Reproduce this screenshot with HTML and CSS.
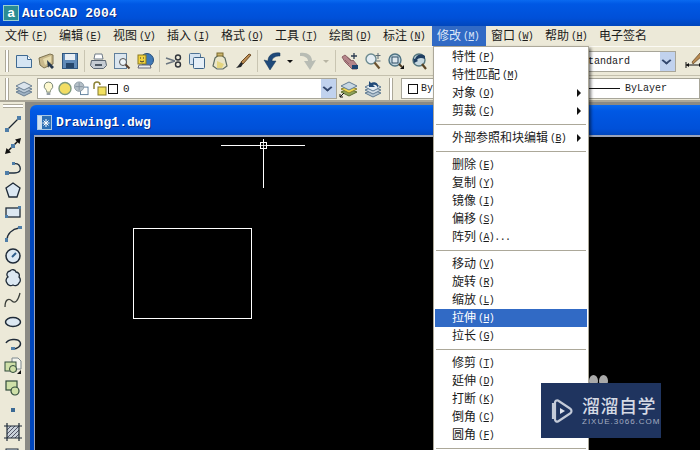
FILE: index.html
```html
<!DOCTYPE html>
<html lang="zh">
<head>
  <meta charset="UTF-8">
  <title>AutoCAD 2004</title>
  <link rel="stylesheet" href="styles.css">
</head>
<body>
  <div class="app">
    <div class="titlebar">
      <span class="app-icon">a</span>
      <span class="title-text">AutoCAD 2004</span>
    </div>

    <ul class="menubar">
      <li>文件<span class="key">(<u>F</u>)</span></li>
      <li>编辑<span class="key">(<u>E</u>)</span></li>
      <li>视图<span class="key">(<u>V</u>)</span></li>
      <li>插入<span class="key">(<u>I</u>)</span></li>
      <li>格式<span class="key">(<u>O</u>)</span></li>
      <li>工具<span class="key">(<u>T</u>)</span></li>
      <li>绘图<span class="key">(<u>D</u>)</span></li>
      <li>标注<span class="key">(<u>N</u>)</span></li>
      <li class="active">修改<span class="key">(<u>M</u>)</span></li>
      <li>窗口<span class="key">(<u>W</u>)</span></li>
      <li>帮助<span class="key">(<u>H</u>)</span></li>
      <li>电子签名</li>
    </ul>

    <div class="toolbar row-one">
      <span class="grip"></span>
      <svg class="ico" viewBox="0 0 18 18"><path d="M1.500 3.500h11l4 4v8h-15z" fill="#d5e5f3" stroke="#3f6a92"/><path d="M12.500 3.500v4h4" fill="#fff" stroke="#3f6a92"/></svg>
      <svg class="ico" viewBox="0 0 18 18"><path d="M1 6l11-4 3 1v9l-9 4-4-3z" fill="#c9b98c" stroke="#7d7350"/><path d="M5 7l8-3v6l-6 3z" fill="#e7dcae"/><path d="M9 8l7 7-2 2-3-3-1 2z" fill="#26384e"/></svg>
      <svg class="ico" viewBox="0 0 18 18"><rect x="1.500" y="1.500" width="15" height="15" fill="#5f8ab8" stroke="#2f567f"/><rect x="4" y="2" width="10" height="6" fill="#e8eef4"/><rect x="5" y="11" width="8" height="5" fill="#24466b"/></svg>
      <span class="sep"></span>
      <svg class="ico" viewBox="0 0 18 18"><path d="M5 2h7l1 5H4z" fill="#fff" stroke="#6f7a86"/><path d="M1.500 8.500h14l1 5-3 3h-10l-3-3z" fill="#c5ccd3" stroke="#5a6672"/><rect x="5" y="12" width="7" height="2" fill="#4d5965"/></svg>
      <svg class="ico" viewBox="0 0 18 18"><rect x="1.500" y="1.500" width="12" height="15" fill="#dbe6ef" stroke="#607f9c"/><circle cx="10" cy="10" r="3.500" fill="#eef4f8" stroke="#555"/><path d="M12.500 12.500l4 4" stroke="#5a3e2c" stroke-width="2"/></svg>
      <svg class="ico" viewBox="0 0 18 18"><circle cx="11" cy="8" r="6.500" fill="#3f78b5" stroke="#264f7c"/><rect x="2" y="3" width="8" height="9" fill="#f2d33f" stroke="#8a7a20"/><path d="M4 6h1M7 6h1M4 9l2 1 2-1" stroke="#333" fill="none"/><path d="M3 13h11l1 3H2z" fill="#e9edf1" stroke="#667"/></svg>
      <span class="sep"></span>
      <svg class="ico" viewBox="0 0 18 18"><path d="M1 6l9 3M1 12l9-3" stroke="#6b7680" stroke-width="1.500"/><circle cx="13" cy="5.500" r="2.500" fill="none" stroke="#30343a" stroke-width="1.400"/><circle cx="13" cy="12.500" r="2.500" fill="none" stroke="#30343a" stroke-width="1.400"/></svg>
      <svg class="ico" viewBox="0 0 18 18"><rect x="1.500" y="1.500" width="11" height="11" rx="1" fill="#d5e3f0" stroke="#4f7395"/><rect x="5.500" y="5.500" width="11" height="11" rx="1" fill="#e6eff7" stroke="#3d6388"/></svg>
      <svg class="ico" viewBox="0 0 18 18"><path d="M4 6l5-4 5 4 2 8-4 3H6l-4-3z" fill="#eae6c9" stroke="#5d6b62" stroke-width="1.200"/><rect x="6" y="1" width="6" height="3" fill="#c9b46a" stroke="#7c6b2e"/><path d="M6 9l7 3-2 4H6z" fill="#e3d57f"/></svg>
      <svg class="ico" viewBox="0 0 18 18"><path d="M15 2l2 1-8 9-2-2z" fill="#b98b52" stroke="#6d4b24"/><path d="M7 10l2 2-2 3-5 1 2-2z" fill="#23262a"/></svg>
      <span class="sep"></span>
      <svg class="ico" viewBox="0 0 18 18"><path d="M17 1C10 0 5 3 5 9L1 8l6 10 6-9-4 0C9 6 12 4 17 4z" fill="#1f4a7a" stroke="#163757" stroke-width=".5"/></svg>
      <span class="caret"></span>
      <svg class="ico" viewBox="0 0 18 18"><path d="M1 1C8 0 13 3 13 9l4-1-6 10-6-9 4 0C9 6 6 4 1 4z" fill="#b8bcb4"/></svg>
      <span class="caret caret-off"></span>
      <span class="sep"></span>
      <svg class="ico" viewBox="0 0 18 18"><path d="M1 5l3-2 7 6 1-1 4 5v4h-5l-3-3-4-4z" fill="#b5858a" stroke="#8d6266"/><path d="M4 8l4 4M6 5l4 4" stroke="#8d6266"/><path d="M13 1v6M10 4h6" stroke="#2b3c50" stroke-width="1.300"/><path d="M11 13h6v4h-6z" fill="#1f4470"/></svg>
      <svg class="ico" viewBox="0 0 18 18"><circle cx="7" cy="7" r="5" fill="#e4edf3" stroke="#6b8a90" stroke-width="1.400"/><path d="M10.500 10.500l5 6" stroke="#6b5230" stroke-width="2.200"/><path d="M14 1v6M11.500 3.500h5M11.500 9h5" stroke="#5b6a74"/></svg>
      <svg class="ico" viewBox="0 0 18 18"><circle cx="8" cy="8" r="6" fill="#c4d6df" stroke="#4e7383" stroke-width="1.400"/><rect x="5" y="5" width="6" height="6" fill="#dfe8ee" stroke="#2e4e66"/><path d="M12 12l3 3" stroke="#4f3c22" stroke-width="2"/><path d="M13 17h4v-4z" fill="#111"/></svg>
      <svg class="ico" viewBox="0 0 18 18"><circle cx="9" cy="8" r="6" fill="#c5d7df" stroke="#55777f" stroke-width="1.400"/><path d="M15 4c-4-3-9-1-10 3l-2-1 1 5 4-2-1-1c1-2 4-3 8-1z" fill="#1f3f62"/><path d="M12 12l4 5" stroke="#5a4526" stroke-width="2.200"/></svg>
      <div class="combo combo-style">
        <span class="combo-text">Standard</span>
        <span class="combo-arrow"></span>
      </div>
      <svg class="ico dim-ico" viewBox="0 0 18 18"><path d="M1 13h16" stroke="#111"/><path d="M1 13l3-2v4zM17 13l-3-2v4z" fill="#111"/><path d="M1 10v6" stroke="#111"/><path d="M15 1L7 10l1 2 9-8z" fill="#b98b52" stroke="#5d4222" stroke-width=".7"/></svg>
    </div>

    <div class="toolbar row-two">
      <span class="grip"></span>
      <svg class="ico" viewBox="0 0 18 18"><path d="M9 9l8 3-8 4-8-4z" fill="#9fb2c4" stroke="#6a7f93"/><path d="M9 6l8 3-8 4-8-4z" fill="#bccbd8" stroke="#6a7f93"/><path d="M9 2l8 4-8 4-8-4z" fill="#dbe4ec" stroke="#6a7f93"/></svg>
      <div class="combo combo-layer">
        <svg class="state bulb" viewBox="0 0 12 16"><path d="M6 1a4.500 4.500 0 0 0-3 8c1 1 1 2 1 3h4c0-1 0-2 1-3a4.500 4.500 0 0 0-3-8z" fill="#fdf8cf" stroke="#6f7d6c"/><path d="M4 13h4v2H4z" fill="#8b969e"/></svg>
        <svg class="state sun" viewBox="0 0 14 14"><circle cx="7" cy="7" r="6" fill="#f2dd63" stroke="#7e9a7d" stroke-width="1.400"/></svg>
        <svg class="state frozen" viewBox="0 0 16 16"><rect x="7.500" y="6.500" width="8" height="8" fill="#fff" stroke="#5e7f9c"/><circle cx="6" cy="6" r="5" fill="#b5c0c8" stroke="#8c9aa4"/><path d="M6 2v8M2 6h8" stroke="#8492a0"/></svg>
        <svg class="state lock" viewBox="0 0 15 15"><path d="M2 8V4a3 3 0 0 1 6 0" fill="none" stroke="#8c8236" stroke-width="1.500"/><rect x="6" y="6" width="8" height="8" fill="#f2e160" stroke="#857a2a"/></svg>
        <span class="swatch"></span>
        <span class="layer-name">0</span>
        <span class="combo-arrow"></span>
      </div>
      <svg class="ico layer-tool" viewBox="0 0 18 18"><path d="M10 9l8 3-8 4-8-4z" fill="#8ea45c" stroke="#5c6d34"/><path d="M10 6l8 3-8 4-8-4z" fill="#f0d94f" stroke="#8a8030"/><path d="M10 2l8 4-8 4-8-4z" fill="#c7d7e2" stroke="#5f7a92"/><path d="M5 13l-4 4M1 14v3h3" stroke="#111" fill="none"/></svg>
      <svg class="ico" viewBox="0 0 18 18"><path d="M9 10l8 3-8 4-8-4z" fill="#b5c5d1" stroke="#5f7a92"/><path d="M9 7l8 3-8 4-8-4z" fill="#d3dee6" stroke="#5f7a92"/><path d="M9 3l8 4-8 4-8-4z" fill="#e4ebf0" stroke="#5f7a92"/><path d="M14 8c1-5-3-7-7-5L5 1v6h6L9 5c2-1 4 0 5 3z" fill="#214a78"/></svg>
      <span class="grip grip-mid"></span>
      <div class="combo combo-props">
        <span class="swatch swatch-props"></span>
        <span class="prop-text">By</span>
        <span class="line-sample"></span>
        <span class="prop-text">ByLayer</span>
      </div>
    </div>

    <div class="workspace">
      <div class="side-toolbar">
        <span class="side-grip"></span>
        <svg class="ico" viewBox="0 0 18 18"><path d="M3 15L15 3" stroke="#1d2730" stroke-width="1.300"/><rect x="1" y="13" width="4" height="4" fill="#4f7ea8"/><rect x="13" y="1" width="4" height="4" fill="#4f7ea8"/></svg>
        <svg class="ico" viewBox="0 0 18 18"><path d="M3 15L15 3" stroke="#111" stroke-width="1.500"/><path d="M17 1l-6 1.500 4.500 4.500zM1 17l6-1.500L2.500 11z" fill="#111"/><rect x="7" y="7" width="4" height="4" fill="#4f7ea8"/></svg>
        <svg class="ico" viewBox="0 0 18 18"><path d="M2 14h8c6 0 7-3 6-6s-4-4-7-3" fill="none" stroke="#203040" stroke-width="1.400"/><rect x="1" y="12" width="4" height="4" fill="#4f7ea8"/><rect x="8" y="3" width="3" height="3" fill="#4f7ea8"/></svg>
        <svg class="ico" viewBox="0 0 18 18"><path d="M9 2l7 5-3 9H5L2 7z" fill="#dce8f2" stroke="#1f2b38" stroke-width="1.300"/></svg>
        <svg class="ico" viewBox="0 0 18 18"><rect x="2" y="5" width="14" height="9" fill="#dce8f2" stroke="#1f2b38" stroke-width="1.300"/><rect x="1" y="12" width="3" height="3" fill="#4f7ea8"/><rect x="14" y="3" width="3" height="3" fill="#4f7ea8"/></svg>
        <svg class="ico" viewBox="0 0 18 18"><path d="M3 15C3 9 8 4 15 3" fill="none" stroke="#1f2b38" stroke-width="1.400"/><rect x="1" y="13" width="3" height="4" fill="#4f7ea8"/><rect x="14" y="1" width="4" height="3" fill="#4f7ea8"/></svg>
        <svg class="ico" viewBox="0 0 18 18"><circle cx="9" cy="9" r="7" fill="#dce8f2" stroke="#1f2b38" stroke-width="1.500"/><path d="M8 10l4-4" stroke="#2d5d8c" stroke-width="2"/></svg>
        <svg class="ico" viewBox="0 0 18 18"><path d="M4 8a3.500 3.500 0 0 1 2-6 3.500 3.500 0 0 1 6 1 3.500 3.500 0 0 1 3 5 4 4 0 0 1 0 6 4 4 0 0 1-6 2 4 4 0 0 1-6-2 4 4 0 0 1 1-6z" fill="#dce8f2" stroke="#1f2b38" stroke-width="1.300"/></svg>
        <svg class="ico" viewBox="0 0 18 18"><path d="M1 16c0-8 4-9 7-6s6 0 8-8" fill="none" stroke="#3b3f3a" stroke-width="1.300"/></svg>
        <svg class="ico" viewBox="0 0 18 18"><ellipse cx="9" cy="9" rx="7.500" ry="4.500" fill="#dce8f2" stroke="#1f2b38" stroke-width="1.500"/></svg>
        <svg class="ico" viewBox="0 0 18 18"><path d="M2 8c2-4 12-5 14-1s-3 7-7 7" fill="none" stroke="#1f2b38" stroke-width="1.500"/><rect x="7" y="12" width="4" height="3" fill="#4f7ea8"/></svg>
        <svg class="ico" viewBox="0 0 18 18"><path d="M8 1h6l3 3v8H8z" fill="#f4f4ec" stroke="#7f8a90"/><rect x="1" y="5" width="11" height="9" fill="#cfe0a8" stroke="#2f4a3a"/><circle cx="9" cy="12" r="3.500" fill="#cfe0a8" stroke="#2f4a3a"/><path d="M13 17l4-4v4z" fill="#111"/></svg>
        <svg class="ico" viewBox="0 0 18 18"><rect x="2" y="2" width="11" height="9" fill="#cfe0a8" stroke="#2f4a3a" stroke-width="1.200"/><circle cx="11" cy="12" r="4" fill="#cfe0a8" stroke="#2f4a3a" stroke-width="1.200"/></svg>
        <svg class="ico" viewBox="0 0 18 18"><rect x="7" y="7" width="4" height="4" fill="#3c6a94"/></svg>
        <svg class="ico" viewBox="0 0 18 18"><rect x="3" y="3" width="12" height="12" fill="#c9d2da"/><path d="M3 7l4-4M3 11l8-8M3 15l12-12M7 15l8-8M11 15l4-4" stroke="#556"/><path d="M3 0v18M15 0v18M0 3h18M0 15h18" stroke="#1f2b38" stroke-width="1.200"/></svg>
        <svg class="ico" viewBox="0 0 18 18"><rect x="2" y="4" width="12" height="12" fill="#dce8f2" stroke="#1f2b38"/></svg>
      </div>

      <div class="mdi-area">
        <div class="child-window">
          <div class="child-title">
            <svg class="child-icon" viewBox="0 0 15 15"><rect x=".5" y=".5" width="14" height="14" fill="#2c6fb5" stroke="#a9c7e4"/><rect x="1" y="1" width="4" height="13" fill="#cfe0f0"/><path d="M9 4v8M5.500 8h7M6.500 5.500l5 5M11.500 5.500l-5 5" stroke="#fff"/></svg>
            <span class="title-text">Drawing1.dwg</span>
          </div>
          <div class="canvas">
            <svg class="drawing" viewBox="35 137 665 313" width="665" height="313">
              <rect x="133.500" y="228.500" width="118" height="90" fill="none" stroke="#fff"/>
              <path d="M221 145.500h84M263.500 139v49" stroke="#fff"/>
              <rect x="260.500" y="142.500" width="6" height="6" fill="#000" stroke="#fff"/>
              <path d="M263.500 142v7M260 145.500h7" stroke="#fff" stroke-width=".8"/>
            </svg>
          </div>
        </div>
      </div>
    </div>

    <div class="menu">
      <div class="menu-item">特性<span class="key">(<u>P</u>)</span></div>
      <div class="menu-item">特性匹配<span class="key">(<u>M</u>)</span></div>
      <div class="menu-item has-sub">对象<span class="key">(<u>O</u>)</span></div>
      <div class="menu-item has-sub">剪裁<span class="key">(<u>C</u>)</span></div>
      <div class="menu-sep"></div>
      <div class="menu-item has-sub">外部参照和块编辑<span class="key">(<u>B</u>)</span></div>
      <div class="menu-sep"></div>
      <div class="menu-item">删除<span class="key">(<u>E</u>)</span></div>
      <div class="menu-item">复制<span class="key">(<u>Y</u>)</span></div>
      <div class="menu-item">镜像<span class="key">(<u>I</u>)</span></div>
      <div class="menu-item">偏移<span class="key">(<u>S</u>)</span></div>
      <div class="menu-item">阵列<span class="key">(<u>A</u>)...</span></div>
      <div class="menu-sep"></div>
      <div class="menu-item">移动<span class="key">(<u>V</u>)</span></div>
      <div class="menu-item">旋转<span class="key">(<u>R</u>)</span></div>
      <div class="menu-item">缩放<span class="key">(<u>L</u>)</span></div>
      <div class="menu-item selected">拉伸<span class="key">(<u>H</u>)</span></div>
      <div class="menu-item">拉长<span class="key">(<u>G</u>)</span></div>
      <div class="menu-sep"></div>
      <div class="menu-item">修剪<span class="key">(<u>T</u>)</span></div>
      <div class="menu-item">延伸<span class="key">(<u>D</u>)</span></div>
      <div class="menu-item">打断<span class="key">(<u>K</u>)</span></div>
      <div class="menu-item">倒角<span class="key">(<u>C</u>)</span></div>
      <div class="menu-item">圆角<span class="key">(<u>F</u>)</span></div>
      <div class="menu-sep"></div>
    </div>

    <span class="blob blob-left"></span>
    <span class="blob blob-right"></span>
    <div class="watermark">
      <svg class="wm-logo" viewBox="0 0 24 26"><path d="M4 5v16" stroke="#c3cad8" stroke-width="2.200" fill="none"/><path d="M9 2.500c-1.500-.5-3 .5-3 2v17c0 1.500 1.500 2.500 3 2l12-8c2-1.200 2-3.800 0-5z" fill="none" stroke="#c3cad8" stroke-width="2.200"/><path d="M11 10l5 3-5 3z" fill="#dfe3ec"/></svg>
      <div class="wm-text">
        <div class="wm-name">溜溜自学</div>
        <div class="wm-url">ZIXUE.3066.COM</div>
      </div>
    </div>
  </div>
</body>
</html>
```

FILE: styles.css
```css
html, body {
  margin: 0;
  padding: 0;
  background-color: #000;
}

.app {
  position: relative;
  display: flex;
  flex-direction: column;
  width: 700px;
  height: 450px;
  overflow: hidden;
  background-color: #ece9d8;
  color: #1a1a1a;
  font-family: "Noto Sans CJK SC", "Liberation Sans", sans-serif;
  font-size: 12px;
}

.key {
  margin-left: 2px;
  font-family: "Liberation Mono", monospace;
  font-size: 10px;
  letter-spacing: -.6px;
  vertical-align: 1px;
}

.titlebar {
  display: flex;
  align-items: center;
  flex: none;
  height: 26px;
  padding-left: 3px;
  background: linear-gradient(#0a6af0 0, #0058e4 4px, #0050d8 18px, #0046bc 26px);
}

.app-icon {
  width: 14px;
  height: 14px;
  margin-right: 3px;
  border: 1px solid #9ad0d0;
  background-color: #2b8d94;
  color: #fff;
  font: bold 13px/13px "Liberation Sans", sans-serif;
  text-align: center;
}

.title-text {
  color: #fff;
  font: bold 13px "Liberation Mono", monospace;
  letter-spacing: .1px;
  text-shadow: 1px 1px 0 #0a2a80;
}

.menubar {
  display: flex;
  flex: none;
  height: 20px;
  margin: 0;
  padding: 0;
  list-style: none;
  line-height: 18px;
}

.menubar li {
  flex: none;
  width: 49px;
  padding-left: 5px;
  white-space: nowrap;
}

.menubar .active {
  background-color: #316ac5;
  color: #dfe8f8;
}

.toolbar {
  display: flex;
  align-items: center;
  flex: none;
  gap: 5px;
  padding-left: 5px;
  box-sizing: border-box;
}

.row-one {
  height: 30px;
  border-top: 1px solid #fbfaf4;
  border-bottom: 1px solid #c4c0ad;
}

.row-two {
  height: 26px;
  padding-top: 1px;
  border-bottom: 2px solid #aca899;
}

.grip {
  flex: none;
  width: 2px;
  height: 22px;
  margin-right: 1px;
  border-left: 1px solid #aca899;
  border-right: 1px solid #aca899;
  background-color: #fff;
}

.grip-mid {
  margin: 0 3px 0 2px;
}

.ico {
  flex: none;
  width: 18px;
  height: 18px;
}

.sep {
  flex: none;
  width: 1px;
  height: 22px;
  background-color: #c9c5b2;
}

.caret {
  flex: none;
  width: 0;
  height: 0;
  margin: 0 1px;
  border-top: 3px solid #111;
  border-left: 3px solid transparent;
  border-right: 3px solid transparent;
}

.caret-off {
  border-top-color: #b8b5a4;
}

.combo {
  display: flex;
  align-items: center;
  flex: none;
  box-sizing: border-box;
  height: 21px;
  border: 1px solid #a8a699;
  background-color: #fff;
  font-family: "Liberation Mono", monospace;
  font-size: 10px;
}

.combo-arrow {
  position: relative;
  flex: none;
  width: 15px;
  height: 19px;
  margin-left: auto;
  background-color: #c1d2ee;
}

.combo-arrow::after {
  content: "";
  position: absolute;
  left: 3px;
  top: 5px;
  width: 5px;
  height: 5px;
  border-right: 2px solid #33476e;
  border-bottom: 2px solid #33476e;
  transform: scale(1, .8) rotate(45deg);
}

.combo-style {
  width: 120px;
  margin-left: auto;
  padding-left: 25px;
}

.dim-ico {
  margin: 0 -3px 0 4px;
}

.combo-layer {
  width: 300px;
  margin-left: -1px;
  padding-left: 5px;
  gap: 1px;
}

.state {
  flex: none;
  height: 15px;
}

.bulb { width: 11px; margin-right: 3px; }
.sun { width: 14px; }
.frozen { width: 16px; margin-right: 2px; }
.lock { width: 15px; }

.swatch {
  flex: none;
  box-sizing: border-box;
  width: 10px;
  height: 10px;
  border: 1px solid #111;
  background-color: #fff;
}

.layer-name {
  margin-left: 4px;
  font-size: 11px;
}

.layer-tool {
  margin-left: -3px;
  margin-right: 2px;
}

.combo-props {
  width: 299px;
  padding-left: 6px;
}

.swatch-props {
  margin-right: 3px;
}

.prop-text {
  color: #222;
}

.line-sample {
  width: 31px;
  height: 1px;
  margin: 0 5px 0 auto;
  background-color: #111;
}

.combo-props .prop-text:last-child {
  margin-right: 32px;
}

.workspace {
  display: flex;
  flex: 1;
  min-height: 0;
}

.side-toolbar {
  display: flex;
  flex-direction: column;
  align-items: center;
  flex: none;
  gap: 4px;
  width: 25px;
  overflow: hidden;
}

.side-grip {
  flex: none;
  width: 20px;
  height: 2px;
  margin: 2px 0 3px;
  border-top: 1px solid #aca899;
  border-bottom: 1px solid #aca899;
  background-color: #fff;
}

.mdi-area {
  flex: 1;
  padding: 3px 0 0 5px;
  background-color: #8b8a84;
}

.child-window {
  display: flex;
  flex-direction: column;
  height: 100%;
  border-radius: 6px 0 0 0;
  background: linear-gradient(#0a6af0 0, #0058e4 6px, #0050d8 24px, #0046bc 30px);
  overflow: hidden;
}

.child-title {
  display: flex;
  align-items: center;
  flex: none;
  gap: 4px;
  height: 30px;
  padding: 5px 0 0 7px;
  box-sizing: border-box;
}

.child-icon {
  flex: none;
  width: 15px;
  height: 15px;
}

.canvas {
  flex: 1;
  margin-left: 4px;
  border-top: 2px solid #9aa3b8;
  border-left: 1px solid #9aa3b8;
  background-color: #000;
  overflow: hidden;
}

.drawing {
  display: block;
}

.menu {
  position: absolute;
  left: 433px;
  top: 46px;
  width: 152px;
  height: 410px;
  padding: 1px;
  border: 1px solid #aca899;
  background-color: #fff;
  box-shadow: 2px 2px 3px rgba(0, 0, 0, .55);
}

.menu-item {
  position: relative;
  height: 18px;
  padding-left: 17px;
  line-height: 16px;
  white-space: nowrap;
}

.menu-item.selected {
  background-color: #316ac5;
  color: #fff;
}

.menu-item.has-sub::after {
  content: "";
  position: absolute;
  right: 6px;
  top: 5px;
  border-left: 4px solid #111;
  border-top: 4px solid transparent;
  border-bottom: 4px solid transparent;
}

.menu-sep {
  height: 1px;
  margin: 4px 1px;
  background-color: #aca899;
}

.blob {
  position: absolute;
  top: 375px;
  width: 9px;
  height: 12px;
  border-radius: 50%;
  background-color: #a9a9a9;
}

.blob-left { left: 589px; }
.blob-right { left: 599px; }

.watermark {
  position: absolute;
  left: 541px;
  top: 383px;
  display: flex;
  align-items: center;
  box-sizing: border-box;
  width: 120px;
  height: 55px;
  padding-left: 8px;
  background-color: #1f345f;
}

.wm-logo {
  flex: none;
  width: 24px;
  height: 26px;
  margin-right: 9px;
}

.wm-name {
  margin-bottom: 2px;
  color: #d5dae4;
  font-size: 18px;
  font-weight: 500;
  line-height: 20px;
  letter-spacing: .5px;
  white-space: nowrap;
}

.wm-url {
  color: #a3adc1;
  font: 8px/10px "Liberation Sans", sans-serif;
  letter-spacing: 1px;
  white-space: nowrap;
}
```
